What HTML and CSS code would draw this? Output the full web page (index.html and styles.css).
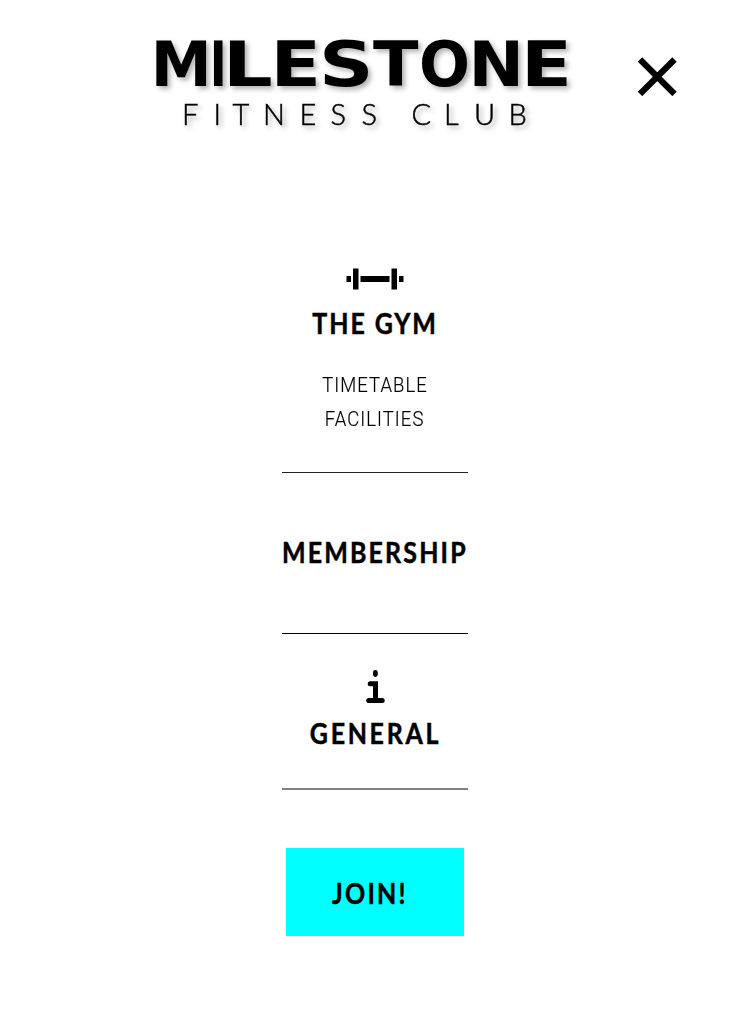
FILE: index.html
```html
<!DOCTYPE html>
<html lang="en">
<head>
<meta charset="utf-8">
<title>Milestone Fitness Club</title>
<link rel="stylesheet" href="styles.css">
</head>
<body>
<header class="header">
  <svg class="logo" width="440" height="110" viewBox="150 30 440 110" role="img" aria-label="Milestone Fitness Club">
    <text class="logo-name" y="86"><tspan x="150.8" textLength="61" lengthAdjust="spacingAndGlyphs">M</tspan><tspan x="209.8" textLength="17" lengthAdjust="spacingAndGlyphs">I</tspan><tspan x="222.8" textLength="50" lengthAdjust="spacingAndGlyphs">L</tspan><tspan x="270.5" textLength="50.5" lengthAdjust="spacingAndGlyphs">E</tspan><tspan x="319" textLength="54.5" lengthAdjust="spacingAndGlyphs">S</tspan><tspan x="373" textLength="45.5" lengthAdjust="spacingAndGlyphs">T</tspan><tspan x="419" textLength="51" lengthAdjust="spacingAndGlyphs">O</tspan><tspan x="468.6" textLength="55.5" lengthAdjust="spacingAndGlyphs">N</tspan><tspan x="521" textLength="51" lengthAdjust="spacingAndGlyphs">E</tspan></text>
    <text class="logo-sub" y="125" x="182 213.5 232.5 263 299.5 330.5 361.5 390 411.5 444 474 508.5">FITNESS CLUB</text>
  </svg>
  <button class="close" aria-label="Close menu">
    <svg width="40" height="40" viewBox="0 0 40 40"><path d="M3 3.5L37.5 38M37.5 3.5L3 38" stroke="#000" stroke-width="6.2"/></svg>
  </button>
</header>
<nav class="menu">
  <section class="group gym">
    <svg class="dumbbell" width="58" height="22" viewBox="0 0 58 22"><path d="M0.5 8h4.5v6H.5zM7 .5h5.5v21H7zM14.5 8h29v6h-29zM45.5 .5H51v21h-5.5zM53 8h4.5v6H53z"/></svg>
    <h2 class="title title-gym">THE GYM</h2>
    <a class="link link-time">TIMETABLE</a>
    <a class="link link-fac">FACILITIES</a>
  </section>
  <section class="group membership">
    <h2 class="title title-member">MEMBERSHIP</h2>
  </section>
  <section class="group general">
    <svg class="info" width="20" height="34" viewBox="-0.7 0 20 34"><rect x="7.3" y="0" width="4.8" height="7" rx="2.4"/><path d="M4.5 13.7H9.8V30.6M3 30.6H16.5" fill="none" stroke="#000" stroke-width="5" stroke-linecap="round" stroke-linejoin="miter"/></svg>
    <h2 class="title title-general">GENERAL</h2>
  </section>
  <a class="join"><span class="title title-join">JOIN!</span></a>
</nav>
</body>
</html>
```
FILE: styles.css
```css
* { box-sizing: border-box; }
body { margin: 0; height: 1032px; background: #fff; color: #000; overflow: hidden; }
.header { display: flex; height: 268px; padding: 30px 0 0 150px; align-items: flex-start; }
.logo { flex: none; filter: drop-shadow(3px 3px 2.5px rgba(0, 0, 0, .3)); }
.logo-name { font: 700 61.7px "DejaVu Sans", sans-serif; }
.logo-sub { font: 300 29px Lato, sans-serif; stroke: #000; stroke-width: .5px; }
.close { margin: 26px 0 0 47px; padding: 0; border: 0; background: none; width: 40px; height: 40px; }
.close svg, .menu svg { display: block; }
.menu { display: flex; flex-direction: column; align-items: center; width: 750px; }
.group { width: 186px; display: flex; flex-direction: column; align-items: center; border-bottom: 1px solid #222; }
.gym { height: 205px; }
.membership { height: 161px; padding-top: 62px; border-color: #000; }
.general { height: 156px; padding-top: 36px; border-bottom: 2px solid #808080; }
.title { margin: 0; font: 700 28.7px/36px Lato, sans-serif; white-space: nowrap; transform: translateY(-.6px) scaleX(.87); -webkit-text-stroke: .5px #000; }
.title-gym { margin-top: 16px; letter-spacing: 2.2px; }
.title-member { letter-spacing: 2.5px; }
.title-general { margin-top: 12px; letter-spacing: 3.1px; }
.link { font: 300 21px/34px Roboto, sans-serif; letter-spacing: 1.2px; white-space: nowrap; transform: scaleX(.88); -webkit-text-stroke: .2px #000; }
.link-time { margin-top: 26px; }
.join { display: flex; width: 178px; height: 88px; margin-top: 58px; padding: 28px 0 0 46px; background: #0ff; }
.title-join { letter-spacing: 2.6px; transform-origin: left top; }
```
